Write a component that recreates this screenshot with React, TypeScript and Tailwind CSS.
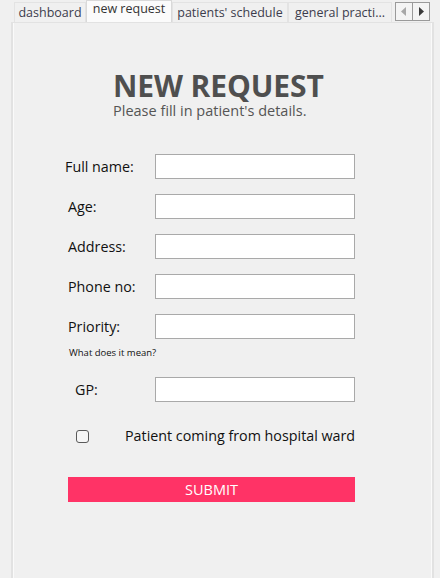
import React from 'react'

const tabs = [
  { label: 'dashboard', w: 'w-[72px]' },
  { label: 'new request', w: 'w-[86px]', active: true },
  { label: "patients' schedule", w: 'w-[116px]' },
  { label: 'general practi...', w: 'w-[104px]' },
]

const fields = [
  { label: 'Full name:', pad: 'pl-0' },
  { label: 'Age:', pad: 'pl-[3px]' },
  { label: 'Address:', pad: 'pl-[3px]' },
  { label: 'Phone no:', pad: 'pl-[3px]' },
  { label: 'Priority:', pad: 'pl-[3px]' },
]

function Field({ label, pad }: { label: string; pad: string }) {
  return (
    <div className="flex items-center h-[25px]">
      <div className={`w-[90px] text-[14.3px] text-[#111] ${pad}`}>{label}</div>
      <input className="w-[200px] h-[25px] bg-white border border-[#a9a9a9] outline-none" />
    </div>
  )
}

export default function App() {
  return (
    <div className="w-[440px] h-[578px] bg-[#f0f0f0] overflow-hidden font-['Open_Sans',sans-serif]">
      {/* tab strip */}
      <div className="flex h-[22px] pl-[14px]">
        {tabs.map((t) =>
          t.active ? (
            <div
              key={t.label}
              className={`${t.w} h-[22px] bg-[#fbfbfb] border border-b-0 border-[#d9d9d9] text-[12.5px] text-[#333] text-center leading-[16px] relative z-10`}
            >
              {t.label}
            </div>
          ) : (
            <div
              key={t.label}
              className={`${t.w} h-[20px] mt-[2px] bg-[#f0f0f0] border border-b-0 border-[#e3e3e3] text-[12.5px] text-[#3c3c4c] text-center leading-[19px] whitespace-nowrap overflow-hidden`}
            >
              {t.label}
            </div>
          )
        )}
        <div className="ml-[3px] mt-[2px] flex">
          <div className="w-[17px] h-[19px] border border-[#9a9a9a] border-r-0 bg-[#f4f4f4] flex items-center justify-center">
            <svg width="6" height="9" viewBox="0 0 6 9"><path d="M5 0 L0 4.5 L5 9 Z" fill="#a8a8a8" /></svg>
          </div>
          <div className="w-[18px] h-[19px] border border-[#9a9a9a] bg-[#f4f4f4] flex items-center justify-center">
            <svg width="6" height="9" viewBox="0 0 6 9"><path d="M1 0 L6 4.5 L1 9 Z" fill="#3a3a3a" /></svg>
          </div>
        </div>
      </div>

      {/* panel */}
      <div className="ml-[11px] w-[423px] h-[560px] border-x-2 border-t border-[#e2e2e2] bg-[#f0f0f0] shadow-[inset_1px_0_0_#fafafa,inset_-1px_0_0_#fafafa]">
        <div className="pl-[100px] pt-[48px]">
          <h1 className="text-[30px] font-bold text-[#4f4f4f] leading-[30px] tracking-[-0.1px]">NEW REQUEST</h1>
          <p className="text-[14.5px] text-[#555] leading-[18px] mt-[1px]">Please fill in patient's details.</p>
        </div>

        <div className="pl-[52px] pt-[34px] flex flex-col">
          <div className="flex flex-col gap-[15px]">
            {fields.map((f) => (
              <Field key={f.label} label={f.label} pad={f.pad} />
            ))}
          </div>
          <div className="pl-[4px] text-[9.5px] text-[#111] leading-[12px] mt-[8px]">What does it mean?</div>
          <div className="mt-[18px]">
            <Field label="GP:" pad="pl-[10px]" />
          </div>

          <div className="flex items-center mt-[24px] h-[20px]">
            <div className="w-[60px] pl-[11px] flex items-center">
              <div className="w-[13px] h-[13px] border border-[#5a5a5a] rounded-[3px] bg-[#f6f6f6]" />
            </div>
            <span className="text-[14.3px] text-[#111]">Patient coming from hospital ward</span>
          </div>

          <button className="mt-[31px] ml-[3px] w-[287px] h-[25px] bg-[#ff3366] text-white text-[14.5px] leading-[25px] text-center">
            SUBMIT
          </button>
        </div>
      </div>
    </div>
  )
}
